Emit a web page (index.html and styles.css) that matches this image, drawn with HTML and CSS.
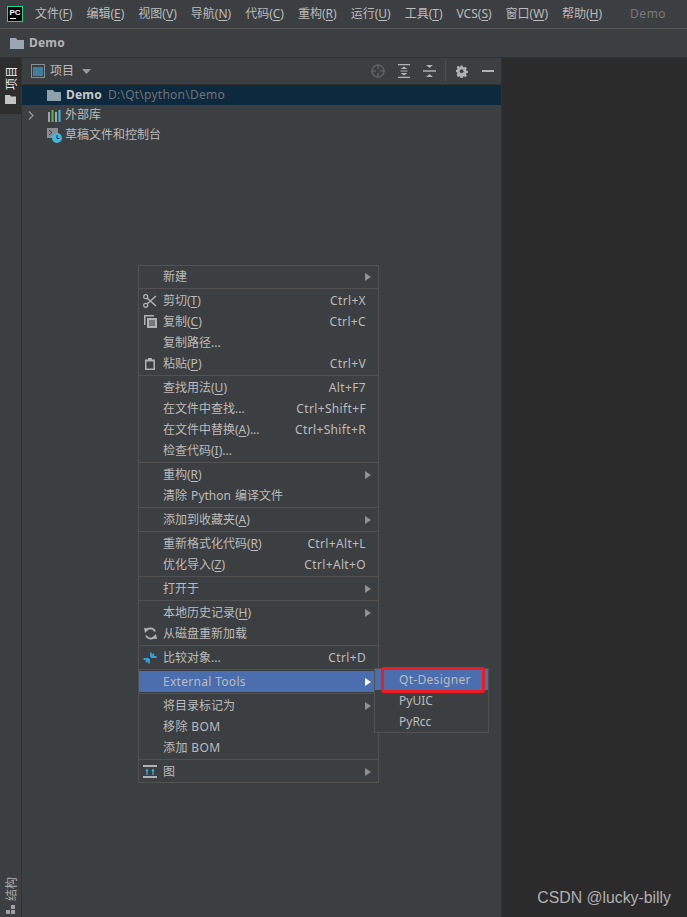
FILE: index.html
```html
<!DOCTYPE html>
<html lang="zh">
<head>
<meta charset="utf-8">
<title>Demo</title>
<link rel="stylesheet" href="styles.css">
</head>
<body>
<div class="app">
  <header class="menubar">
    <svg class="logo" width="16" height="16" viewBox="0 0 16 16"><rect x="0.5" y="0.5" width="15" height="15" fill="#000" stroke="#21d789"/><text x="2.5" y="9" class="logo-text">PC</text><rect x="3" y="12" width="6" height="1" fill="#fff"/></svg>
    <nav class="menus">
      <span class="m1">文件(<u>F</u>)</span>
      <span class="m1">编辑(<u>E</u>)</span>
      <span class="m1">视图(<u>V</u>)</span>
      <span class="m1">导航(<u>N</u>)</span>
      <span class="m1">代码(<u>C</u>)</span>
      <span class="m1">重构(<u>R</u>)</span>
      <span class="m1">运行(<u>U</u>)</span>
      <span class="m1">工具(<u>T</u>)</span>
      <span class="m1">VCS(<u>S</u>)</span>
      <span class="m1">窗口(<u>W</u>)</span>
      <span class="m1">帮助(<u>H</u>)</span>
    </nav>
    <span class="title">Demo</span>
  </header>
  <div class="navbar">
    <svg width="14" height="12" viewBox="0 0 14 12"><path d="M0 1h6l1.500 2H14v9H0z" fill="#9aa7b0"/></svg>
    <b>Demo</b>
  </div>
  <div class="workspace">
    <aside class="strip">
      <div class="strip-active">
        <span class="vtext">项目</span>
        <svg width="11" height="9" viewBox="0 0 11 9"><path d="M0 0h5l1 1.500h5V9H0z" fill="#c4c4c4"/></svg>
      </div>
      <div class="strip-bottom">
        <span class="vtext dim">结构</span>
        <svg width="10" height="10" viewBox="0 0 10 10"><path d="M5 0h4v4H5zM0 5h4v4H0zM5 5h4v4H5z" fill="#a0a0a0"/></svg>
      </div>
    </aside>
    <section class="panel">
      <div class="panel-head">
        <svg class="ph-win" width="14" height="14" viewBox="0 0 14 14"><rect x="0.500" y="0.500" width="13" height="13" fill="none" stroke="#8a8d8f"/><rect x="2" y="3" width="10" height="9" fill="#40809f"/></svg>
        <span class="ph-title">项目</span>
        <svg class="ph-caret" width="9" height="5" viewBox="0 0 9 5"><path d="M0 0h9L4.500 5z" fill="#9a9c9e"/></svg>
        <span class="ph-tools">
          <svg class="t-target" width="14" height="14" viewBox="0 0 14 14"><circle cx="7" cy="7" r="6" fill="none" stroke="#5e6163" stroke-width="1.500"/><path d="M7 0v5M7 9v5M0 7h5M9 7h5" stroke="#5e6163" stroke-width="1.500"/></svg>
          <svg class="t-expand" width="12" height="14" viewBox="0 0 12 14"><path d="M0 .5h12M0 13.500h12" stroke="#afb1b3" stroke-width="1.500"/><path d="M2.500 5L6 2.500 9.500 5zM2.500 9L6 11.500 9.500 9z" fill="#afb1b3"/><path d="M2.500 7h7" stroke="#afb1b3"/></svg>
          <svg class="t-collapse" width="13" height="14" viewBox="0 0 13 14"><path d="M0 7h13" stroke="#afb1b3" stroke-width="1.500"/><path d="M3 1l3.500 3L10 1zM3 13l3.500-3L10 13z" fill="#afb1b3"/></svg>
          <i class="ph-sep"></i>
          <svg class="t-gear" width="12" height="13" viewBox="0 0 16 16"><path d="M6.500 0h3l.4 2.300 1.500.7 2-1.300 2.100 2.100-1.300 2 .7 1.500 2.100.4v3l-2.300.4-.6 1.400 1.300 2-2.100 2.100-2-1.300-1.400.6-.4 2.300h-3l-.4-2.300-1.500-.6-2 1.300L.9 12.900l1.300-2-.6-1.400L0 9.500v-3l1.600-.4.600-1.500-1.300-2L3 .5l2 1.300L6.100 2.300z" transform="scale(.94)" fill="#afb1b3" fill-rule="evenodd"/><circle cx="7.500" cy="7.500" r="2.500" fill="#3c3f41"/></svg>
          <svg class="t-min" width="12" height="2" viewBox="0 0 12 2"><rect width="12" height="2" fill="#afb1b3"/></svg>
        </span>
      </div>
      <div class="row selected">
        <svg width="14" height="12" viewBox="0 0 14 12"><path d="M0 1h6l1.500 2H14v9H0z" fill="#8fa0ad"/></svg>
        <b class="root-name">Demo</b><span class="path">D:\Qt\python\Demo</span>
      </div>
      <div class="row">
        <svg class="chev" width="6" height="9" viewBox="0 0 6 9"><path d="M1 .5l4 4-4 4" fill="none" stroke="#9a9c9e" stroke-width="1.200"/></svg>
        <svg width="14" height="13" viewBox="0 0 14 13"><path d="M1 3h2v10H1z" fill="#9aa7b0"/><path d="M4.500 1h2v12h-2z" fill="#62b543"/><path d="M8 3h2v10H8z" fill="#9aa7b0"/><path d="M11.500 1h2v12h-2z" fill="#40b6e0"/></svg>
        <span>外部库</span>
      </div>
      <div class="row">
        <svg class="scratch" width="15" height="15" viewBox="0 0 15 15"><rect x="0" y="0" width="11" height="10" fill="#8a8e91"/><path d="M2 2l3 2.500L2 7" fill="none" stroke="#3c3f41"/><circle cx="10" cy="10" r="5" fill="#40b6e0"/><path d="M10 7v3.500h2.500" fill="none" stroke="#23343d"/></svg>
        <span>草稿文件和控制台</span>
      </div>
    </section>
    <main class="editor"></main>
  </div>
</div>

<div class="ctx">
  <div class="it"><span class="ic"></span><span class="lb">新建</span><i class="arr"></i></div>
  <hr>
  <div class="it"><span class="ic"><svg width="14" height="14" viewBox="0 0 14 14"><circle cx="2.700" cy="2.700" r="2" fill="none" stroke="#afb1b3" stroke-width="1.300"/><circle cx="2.700" cy="11.300" r="2" fill="none" stroke="#afb1b3" stroke-width="1.300"/><path d="M4 4l9 8M4 10l9-8" stroke="#afb1b3" stroke-width="1.500"/></svg></span><span class="lb">剪切(<u>T</u>)</span><span class="sc">Ctrl+X</span></div>
  <div class="it"><span class="ic"><svg width="13" height="13" viewBox="0 0 13 13"><path d="M0 0h10v1.500H1.500V10H0z" fill="#afb1b3"/><path d="M3 3h10v10H3z" fill="#afb1b3"/><path d="M5 6h6M5 8h6M5 10h6" stroke="#3c3f41"/></svg></span><span class="lb">复制(<u>C</u>)</span><span class="sc">Ctrl+C</span></div>
  <div class="it"><span class="ic"></span><span class="lb">复制路径...</span></div>
  <div class="it"><span class="ic"><svg width="10" height="12" viewBox="0 0 10 12"><path d="M3 0h4v1.500h3V12H0V1.500h3z" fill="#afb1b3"/><rect x="1.500" y="3.500" width="7" height="7" fill="#3c3f41"/></svg></span><span class="lb">粘贴(<u>P</u>)</span><span class="sc">Ctrl+V</span></div>
  <hr>
  <div class="it"><span class="ic"></span><span class="lb">查找用法(<u>U</u>)</span><span class="sc">Alt+F7</span></div>
  <div class="it"><span class="ic"></span><span class="lb">在文件中查找...</span><span class="sc">Ctrl+Shift+F</span></div>
  <div class="it"><span class="ic"></span><span class="lb">在文件中替换(<u>A</u>)...</span><span class="sc">Ctrl+Shift+R</span></div>
  <div class="it"><span class="ic"></span><span class="lb">检查代码(<u>I</u>)...</span></div>
  <hr>
  <div class="it"><span class="ic"></span><span class="lb">重构(<u>R</u>)</span><i class="arr"></i></div>
  <div class="it"><span class="ic"></span><span class="lb py">清除 Python 编译文件</span></div>
  <hr>
  <div class="it"><span class="ic"></span><span class="lb">添加到收藏夹(<u>A</u>)</span><i class="arr"></i></div>
  <hr>
  <div class="it"><span class="ic"></span><span class="lb">重新格式化代码(<u>R</u>)</span><span class="sc">Ctrl+Alt+L</span></div>
  <div class="it"><span class="ic"></span><span class="lb">优化导入(<u>Z</u>)</span><span class="sc">Ctrl+Alt+O</span></div>
  <hr>
  <div class="it"><span class="ic"></span><span class="lb">打开于</span><i class="arr"></i></div>
  <hr>
  <div class="it"><span class="ic"></span><span class="lb">本地历史记录(<u>H</u>)</span><i class="arr"></i></div>
  <div class="it"><span class="ic"><svg width="13" height="13" viewBox="0 0 13 13"><path d="M11 4.500A5 5 0 0 0 2 4M2 8.500A5 5 0 0 0 11 9" fill="none" stroke="#afb1b3" stroke-width="1.800"/><path d="M0 1l5 .5L1 6zM13 12l-5-.5L12 7z" fill="#afb1b3"/></svg></span><span class="lb">从磁盘重新加载</span></div>
  <hr>
  <div class="it"><span class="ic"><svg width="14" height="14" viewBox="0 0 14 14"><path d="M8 6V1.500M8 6h5.500M8 6l3-3" fill="none" stroke="#389fd6" stroke-width="1.800"/><path d="M6 8v4.500M6 8H.5M6 8l-3 3" fill="none" stroke="#389fd6" stroke-width="1.800"/></svg></span><span class="lb">比较对象...</span><span class="sc">Ctrl+D</span></div>
  <hr>
  <div class="it active"><span class="ic"></span><span class="lb latin">External Tools</span><i class="arr"></i></div>
  <hr>
  <div class="it"><span class="ic"></span><span class="lb">将目录标记为</span><i class="arr"></i></div>
  <div class="it"><span class="ic"></span><span class="lb bom">移除 BOM</span></div>
  <div class="it"><span class="ic"></span><span class="lb bom">添加 BOM</span></div>
  <hr>
  <div class="it"><span class="ic"><svg width="14" height="13" viewBox="0 0 14 13"><path d="M0 1h14M0 12h14" stroke="#afb1b3" stroke-width="2"/><path d="M4 10V5M10 10V5" stroke="#40b6e0" stroke-width="1.200"/><path d="M2.500 6L4 3.500 5.500 6zM8.500 6L10 3.500 11.500 6z" fill="#40b6e0"/></svg></span><span class="lb">图</span><i class="arr"></i></div>
</div>

<div class="sub">
  <div class="sub-it active">Qt-Designer</div>
  <div class="sub-it">PyUIC</div>
  <div class="sub-it">PyRcc</div>
</div>
<div class="redbox"></div>
<div class="mark">CSDN @lucky-billy</div>
</body>
</html>
```
FILE: styles.css
```css
* { box-sizing: border-box; }
html, body { margin: 0; padding: 0; }
body {
  width: 687px;
  height: 917px;
  overflow: hidden;
  position: relative;
  background: #3c3f41;
  color: #bbbbbb;
  font: 12px/16px "Noto Sans", "Noto Sans CJK SC", sans-serif;
}
svg { display: block; flex: none; }
u { text-underline-offset: 2px; }
.app { display: flex; flex-direction: column; height: 917px; }

.menubar {
  height: 29px;
  flex: none;
  display: flex;
  align-items: center;
  padding-left: 7px;
  border-bottom: 1px solid #555555;
}
.logo-text { font: bold 8px "Liberation Sans", sans-serif; fill: #fff; }
.menus { display: flex; margin-left: 12px; gap: 14px; }
.m1 { white-space: nowrap; }
.title { margin-left: 28px; color: #787878; letter-spacing: .5px; }

.navbar {
  height: 29px;
  flex: none;
  display: flex;
  align-items: center;
  gap: 5px;
  padding-left: 10px;
  border-bottom: 1px solid #323232;
}
.navbar b { color: #b4b4b4; letter-spacing: .2px; }

.workspace { flex: 1; display: flex; min-height: 0; }
.strip {
  width: 22px;
  flex: none;
  display: flex;
  flex-direction: column;
  justify-content: space-between;
  border-right: 1px solid #323232;
}
.strip-active {
  height: 56px;
  background: #2d2d2d;
  display: flex;
  flex-direction: column;
  align-items: center;
  gap: 5px;
  padding-top: 8px;
}
.strip-bottom {
  display: flex;
  flex-direction: column;
  align-items: center;
  gap: 4px;
  padding-bottom: 2px;
}
.vtext {
  writing-mode: vertical-rl;
  text-orientation: sideways;
  transform: rotate(180deg);
  color: #e6e6e6;
  line-height: 14px;
  font-size: 12px;
  margin-left: 2px;
}
.vtext.dim { color: #a8adb0; }

.panel {
  width: 480px;
  flex: none;
  border-right: 1px solid #323232;
}
.panel-head {
  height: 27px;
  display: flex;
  align-items: center;
  padding-left: 9px;
  border-bottom: 1px solid #323232;
}
.ph-title { margin-left: 5px; }
.ph-caret { margin-left: 8px; }
.ph-tools {
  margin-left: auto;
  padding-right: 7px;
  display: flex;
  align-items: center;
}
.t-expand { margin-left: 13px; }
.t-collapse { margin-left: 13px; }
.ph-sep { width: 1px; height: 20px; background: #515151; margin: 0 10px 0 9px; }
.t-min { margin-left: 14px; }

.row {
  height: 20px;
  display: flex;
  align-items: center;
  gap: 4px;
  padding-left: 25px;
  white-space: nowrap;
}
.selected { background: #0d293e; }
.root-name { color: #c8c8c8; margin-left: 1px; letter-spacing: .2px; }
.path { color: #6f7375; margin-left: 2px; letter-spacing: .25px; }
.chev { margin-left: -19px; margin-right: 9px; }
.scratch { margin-right: -1px; }

.editor { flex: 1; background: #2b2b2b; }

.ctx {
  position: absolute;
  left: 138px;
  top: 265px;
  width: 241px;
  background: #3c3f41;
  border: 1px solid #515151;
}
.ctx hr {
  height: 3px;
  margin: 0;
  border: 0;
  background: linear-gradient(#3c3f41 1px, #515151 1px, #515151 2px, #3c3f41 2px);
}
.it {
  height: 21px;
  display: flex;
  align-items: center;
  padding-right: 12px;
  white-space: nowrap;
  position: relative;
}
.ic {
  width: 24px;
  flex: none;
  display: flex;
  justify-content: center;
  padding-right: 2px;
}
.lb { flex: 1; }
.latin { letter-spacing: .3px; }
.py { word-spacing: 1px; }
.bom { letter-spacing: .4px; }
.sc { color: #bbbbbb; letter-spacing: .35px; }
.arr {
  width: 0;
  height: 0;
  margin-right: -5px;
  border-left: 6px solid #8f9193;
  border-top: 4px solid transparent;
  border-bottom: 4px solid transparent;
}
.it.active { background: #4b6eaf; }
.it.active .arr { border-left-color: #ffffff; }

.sub {
  position: absolute;
  left: 374px;
  top: 668px;
  width: 115px;
  background: #3c3f41;
  border: 1px solid #515151;
}
.sub-it {
  height: 21px;
  line-height: 21px;
  padding-left: 24px;
}
.sub-it.active { background: #4b6eaf; letter-spacing: .3px; }

.redbox {
  position: absolute;
  left: 381px;
  top: 667px;
  width: 104px;
  height: 26px;
  border: 3px solid #ed1c24;
  border-radius: 3px;
}
.mark {
  position: absolute;
  right: 16px;
  top: 888px;
  color: #b0b0b0;
  font: 15.800px/20px "Liberation Sans", sans-serif;
}
```
